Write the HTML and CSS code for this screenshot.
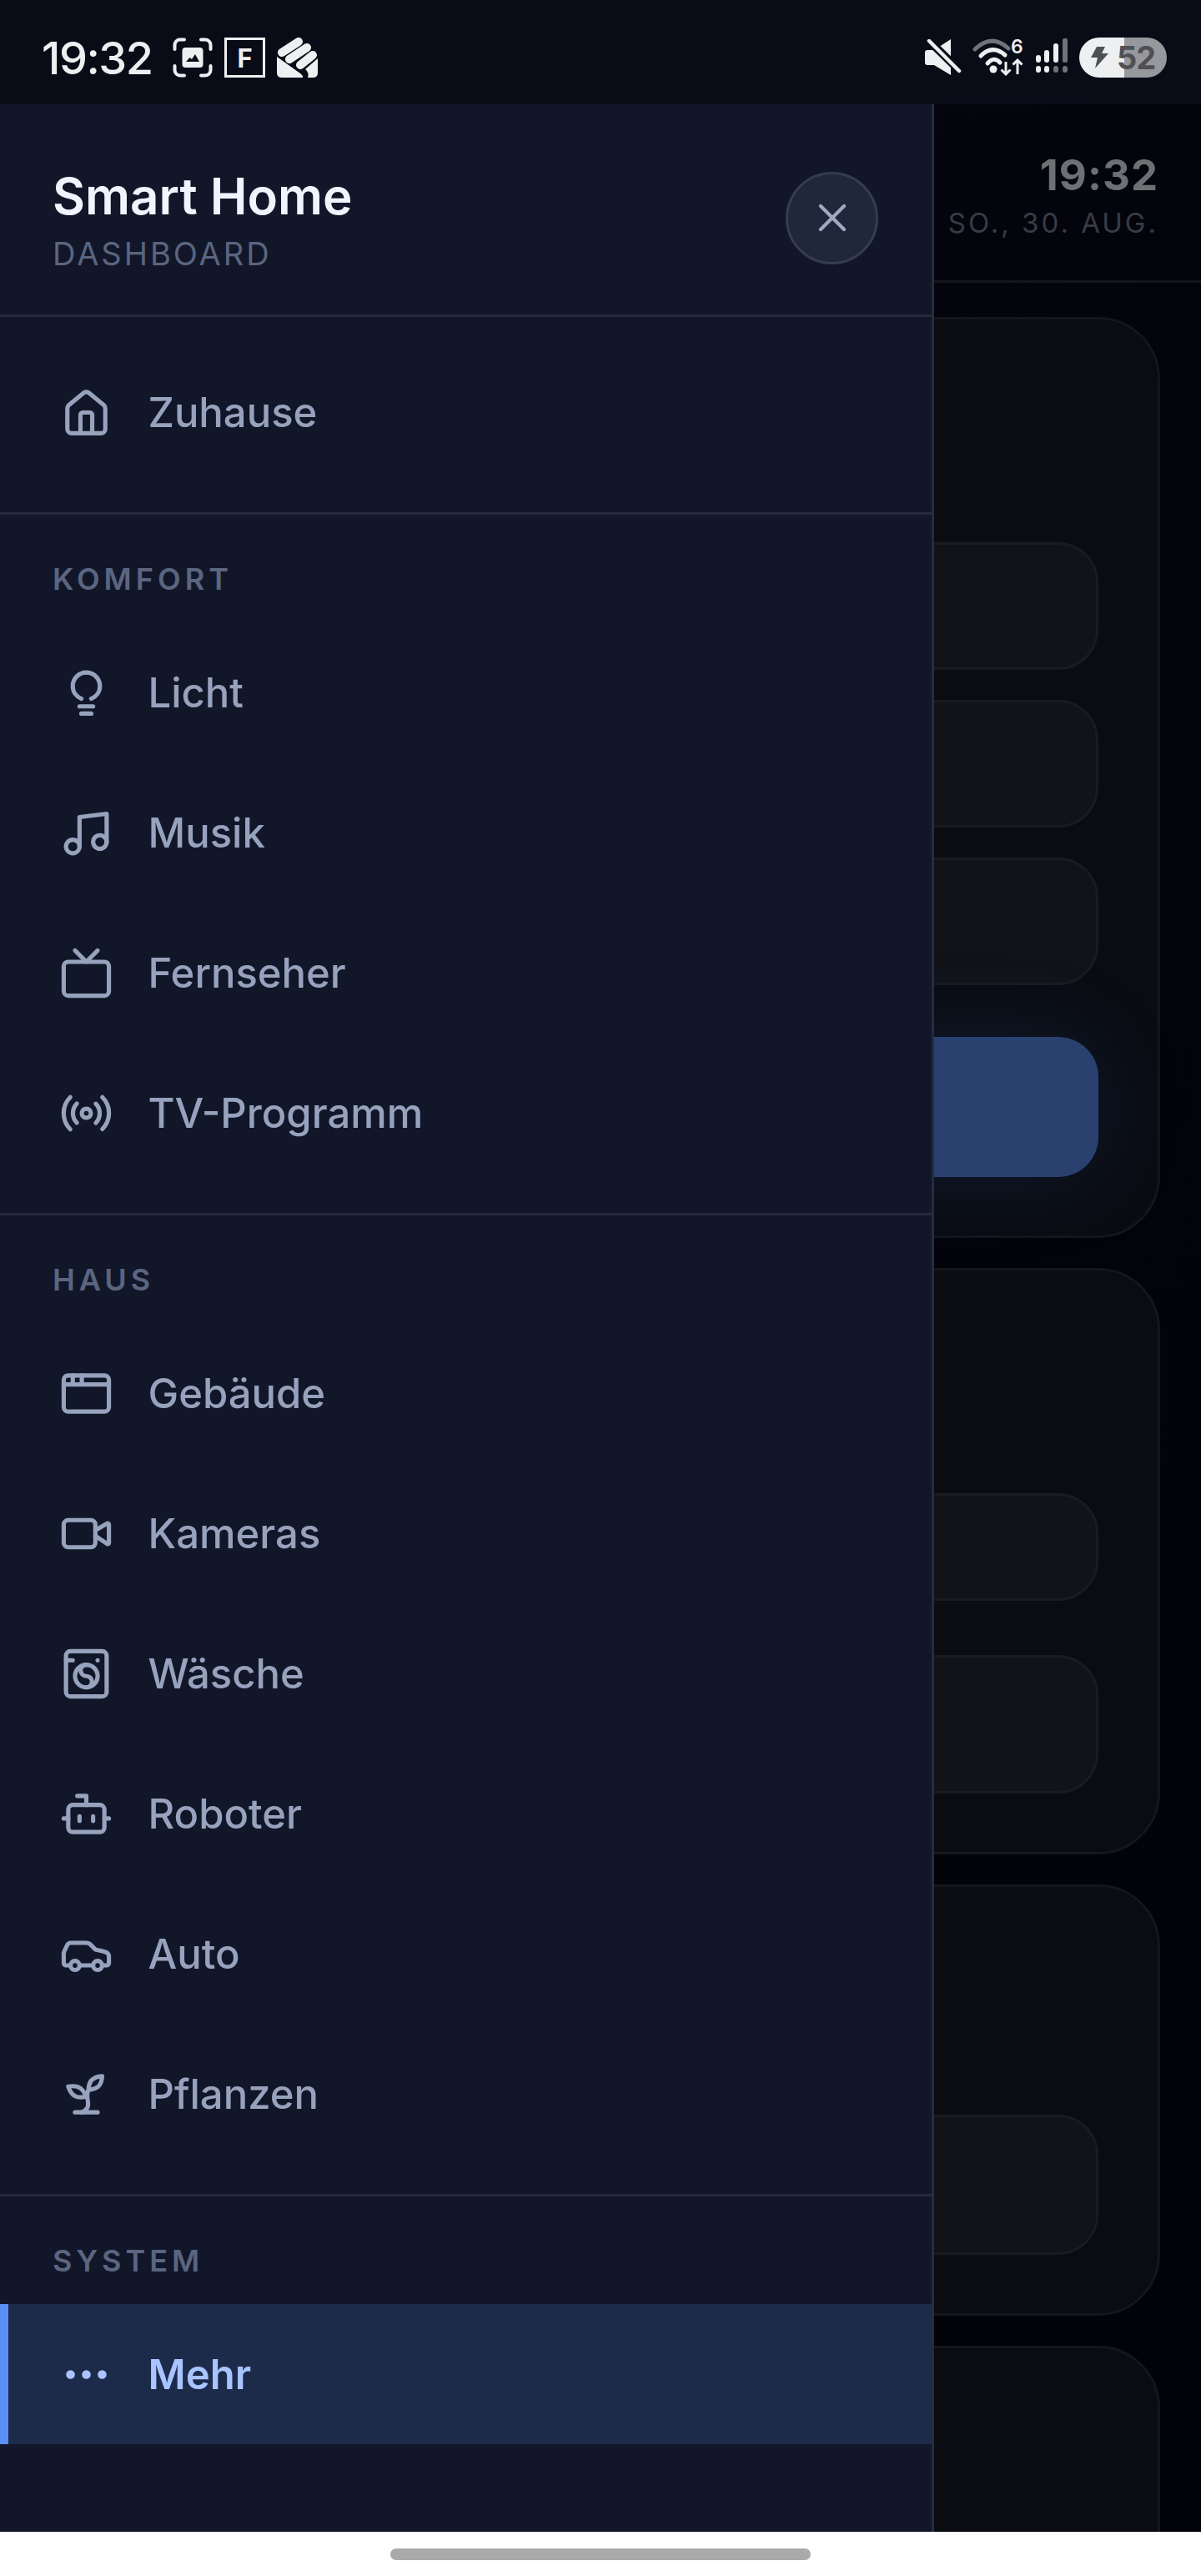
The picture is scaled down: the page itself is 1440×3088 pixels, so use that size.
FILE: index.html
```html
<!DOCTYPE html>
<html lang="de">
<head>
    <meta charset="UTF-8">
    <meta name="viewport" content="width=device-width, initial-scale=1.0">
    <title>Smart Home</title>
    <link rel="stylesheet" href="styles.css">
</head>
<body>
    <div class="phone">
        <!-- Android Statusleiste -->
        <div class="statusbar">
            <div class="status-left">
                <span class="status-time">19:32</span>
                <svg class="st-shot" width="48" height="48" viewBox="0 0 48 48">
                    <path d="M2.500 14V9a6.500 6.500 0 0 1 6.500-6.500h5M34 2.500h5a6.500 6.500 0 0 1 6.500 6.500v5M45.500 34v5a6.500 6.500 0 0 1-6.500 6.500h-5M14 45.500H9A6.500 6.500 0 0 1 2.500 39v-5" fill="none" stroke="#eeeff1" stroke-width="4" stroke-linecap="round"/>
                    <rect x="11.500" y="12" width="25" height="24" rx="4" fill="#eeeff1"/>
                    <path d="M16 29l4.500-5 2.500 2 4-6 5 9z" fill="#0a0d18"/>
                </svg>
                <span class="st-fbox">F</span>
                <svg class="st-fold" width="49" height="48" viewBox="0 0 49 48">
                    <path d="M0 23l28 20q4 3 3 5H6q-6 0-6-6zM37 48q2-6-3-10l15-13v17q0 6-6 6z" fill="#eeeff1"/>
                    <path d="M6 18L26 5M15 26L36 12M28 33L43 21" fill="none" stroke="#eeeff1" stroke-width="10" stroke-linecap="round"/>
                </svg>
            </div>
            <div class="status-right">
                <svg width="44" height="44" viewBox="0 0 44 44">
                    <path d="M0 16q0-3 3-3h8L31 0v43L11 31H3q-3 0-3-3z" fill="#eeeff1"/>
                    <path d="M2 -1L42 38" stroke="#090c17" stroke-width="10"/>
                    <path d="M5 2L41 38" stroke="#eeeff1" stroke-width="4.500" stroke-linecap="round"/>
                </svg>
                <svg width="62" height="58" viewBox="0 -6 62 58">
                    <path d="M3 13Q23 -6 43 12" fill="none" stroke="#707277" stroke-width="5" stroke-linecap="round"/>
                    <path d="M10 21Q24 7 39 20" fill="none" stroke="#eeeff1" stroke-width="5" stroke-linecap="round"/>
                    <path d="M18 30Q26 21 33 29" fill="none" stroke="#eeeff1" stroke-width="5" stroke-linecap="round"/>
                    <circle cx="25" cy="37" r="4.500" fill="#eeeff1"/>
                    <text class="st-six" x="46" y="18">6</text>
                    <path d="M40 28V43M34.500 37.500L40 43l5.500-5.500M54 43V26M48.500 31.500L54 26l5.500 5.500" fill="none" stroke="#eeeff1" stroke-width="3"/>
                </svg>
                <svg width="40" height="46" viewBox="0 0 40 46">
                    <rect x="1" y="20" width="6" height="9" rx="3" fill="#eeeff1"/>
                    <rect x="11" y="14" width="6" height="15" rx="3" fill="#eeeff1"/>
                    <rect x="22" y="6" width="6" height="23" rx="3" fill="#eeeff1"/>
                    <rect x="33" y="0" width="6" height="29" rx="2" fill="#707277"/>
                    <rect x="1" y="33" width="6" height="8" rx="3" fill="#eeeff1"/>
                    <rect x="11" y="33" width="6" height="8" rx="3" fill="#eeeff1"/>
                    <rect x="22" y="33" width="6" height="8" rx="3" fill="#707277"/>
                    <rect x="33" y="33" width="6" height="8" rx="3" fill="#707277"/>
                </svg>
                <div class="battery">
                    <svg width="22" height="26" viewBox="0 0 22 26">
                        <path d="M8 0h10l-4 8h8L6 26l3-13H1z" fill="#4f5055"/>
                    </svg>
                    <span class="battery-num">52</span>
                </div>
            </div>
        </div>

        <div class="stage">
            <!-- Dashboard hinter dem Menue -->
            <main class="main">
                <header class="main-head">
                    <div class="clock">19:32</div>
                    <div class="date">SO., 30. AUG.</div>
                </header>
                <div class="cards">
                    <section class="card card-a">
                        <div class="tile tile-m"></div>
                        <div class="tile tile-m"></div>
                        <div class="tile tile-m"></div>
                        <div class="tile-blue"></div>
                    </section>
                    <section class="card card-b">
                        <div class="tile tile-s"></div>
                        <div class="tile tile-l"></div>
                    </section>
                    <section class="card card-b card-d">
                        <div class="tile tile-l"></div>
                    </section>
                    <section class="card card-c"></section>
                </div>
            </main>

            <!-- Seitenmenue -->
            <aside class="drawer">
                <div class="drawer-head">
                    <div class="brand-block">
                        <div class="brand">Smart Home</div>
                        <div class="brand-sub">DASHBOARD</div>
                    </div>
                    <button class="close-btn" type="button" aria-label="Schließen">
                        <svg class="close-icon" viewBox="0 0 24 24"><path d="M18 6L6 18M6 6l12 12"/></svg>
                    </button>
                </div>

                <nav class="nav-group nav-first">
                    <a class="nav-item">
                        <svg class="icon" viewBox="0 0 24 24"><path d="M3.600 10.200a2 2 0 0 1 .7-1.500l6.400-5.300a2 2 0 0 1 2.600 0l6.400 5.300a2 2 0 0 1 .7 1.500v9a2 2 0 0 1-2 2H5.600a2 2 0 0 1-2-2z"/><path d="M14.600 21v-8a1 1 0 0 0-1-1h-3.200a1 1 0 0 0-1 1v8"/></svg>
                        <span>Zuhause</span>
                    </a>
                </nav>

                <nav class="nav-group">
                    <div class="nav-label">KOMFORT</div>
                    <a class="nav-item">
                        <svg class="icon" viewBox="0 0 24 24"><path d="M9.800 14.600C7.500 13.700 6 11.500 6 9a6 6 0 0 1 12 0c0 2.500-1.500 4.700-3.800 5.600"/><path d="M9 18h6M9.800 21.200h4.400"/></svg>
                        <span>Licht</span>
                    </a>
                    <a class="nav-item">
                        <svg class="icon" viewBox="0 0 24 24"><path d="M9 18V5l12-1.500V16"/><circle cx="6" cy="18" r="3"/><circle cx="18" cy="16" r="3"/></svg>
                        <span>Musik</span>
                    </a>
                    <a class="nav-item">
                        <svg class="icon" viewBox="0 0 24 24"><rect x="2" y="7" width="20" height="15" rx="2"/><path d="M17 2l-5 5-5-5"/></svg>
                        <span>Fernseher</span>
                    </a>
                    <a class="nav-item">
                        <svg class="icon" viewBox="0 0 24 24"><path d="M4.900 19.100C1 15.200 1 8.800 4.900 4.900"/><path d="M7.800 16.200c-2.300-2.300-2.300-6.100 0-8.500"/><circle cx="12" cy="12" r="2"/><path d="M16.200 7.800c2.300 2.300 2.300 6.100 0 8.500"/><path d="M19.100 4.900C23 8.800 23 15.100 19.100 19"/></svg>
                        <span>TV-Programm</span>
                    </a>
                </nav>

                <nav class="nav-group">
                    <div class="nav-label">HAUS</div>
                    <a class="nav-item">
                        <svg class="icon" viewBox="0 0 24 24"><rect x="2" y="4" width="20" height="16" rx="2"/><path d="M10 4v4M2 8h20M6 4v4"/></svg>
                        <span>Gebäude</span>
                    </a>
                    <a class="nav-item">
                        <svg class="icon" viewBox="0 0 24 24"><path d="M16 13l5.200 3.500a.5.5 0 0 0 .8-.4V7.900a.5.5 0 0 0-.8-.4L16 10.500"/><rect x="2" y="6" width="14" height="12" rx="2"/></svg>
                        <span>Kameras</span>
                    </a>
                    <a class="nav-item">
                        <svg class="icon" viewBox="0 0 24 24"><path d="M3 6h3M17 6h.01"/><rect x="3" y="2" width="18" height="20" rx="2"/><circle cx="12" cy="13" r="5"/><path d="M12 18a2.500 2.500 0 0 0 0-5 2.500 2.500 0 0 1 0-5"/></svg>
                        <span>Wäsche</span>
                    </a>
                    <a class="nav-item">
                        <svg class="icon" viewBox="0 0 24 24"><path d="M12 8V4H8"/><rect x="4" y="8" width="16" height="12" rx="2"/><path d="M2 14h2M20 14h2M15 13v2M9 13v2"/></svg>
                        <span>Roboter</span>
                    </a>
                    <a class="nav-item">
                        <svg class="icon" viewBox="0 0 24 24"><path d="M19 17h2c.6 0 1-.4 1-1v-3c0-.9-.7-1.700-1.500-1.900C18.700 10.600 16 10 16 10s-1.300-1.400-2.200-2.300c-.5-.4-1.100-.7-1.800-.7H5c-.6 0-1.100.4-1.400.9l-1.400 2.900A3.700 3.700 0 0 0 2 12v4c0 .6.4 1 1 1h2"/><circle cx="7" cy="17" r="2"/><path d="M9 17h6"/><circle cx="17" cy="17" r="2"/></svg>
                        <span>Auto</span>
                    </a>
                    <a class="nav-item">
                        <svg class="icon" viewBox="0 0 24 24"><path d="M7 20h10"/><path d="M10 20c5.500-2.500.8-6.400 3-10"/><path d="M9.500 9.400c1.100.8 1.800 2.200 2.300 3.700-2 .4-3.500.4-4.800-.3-1.200-.6-2.300-1.900-3-4.200 2.800-.5 4.400 0 5.500.8z"/><path d="M14.100 6a7 7 0 0 0-1.100 4c1.900-.1 3.300-.6 4.300-1.400 1-1 1.600-2.300 1.700-4.600-2.700.1-4 1-4.900 2z"/></svg>
                        <span>Pflanzen</span>
                    </a>
                </nav>

                <nav class="nav-group nav-last">
                    <div class="nav-label">SYSTEM</div>
                    <a class="nav-item nav-active">
                        <svg class="icon" viewBox="0 0 24 24"><circle cx="12" cy="12" r="1"/><circle cx="19" cy="12" r="1"/><circle cx="5" cy="12" r="1"/></svg>
                        <span>Mehr</span>
                    </a>
                </nav>
            </aside>
        </div>

        <div class="gesturebar">
            <div class="gesture-pill"></div>
        </div>
    </div>
</body>
</html>
```

FILE: styles.css
```css
* {
    box-sizing: border-box;
}
html, body {
    margin: 0;
    padding: 0;
}
body {
    width: 1440px;
    height: 3088px;
    font-family: Inter, "Liberation Sans", sans-serif;
    background-color: #fff;
    overflow: hidden;
}
.phone {
    display: flex;
    flex-direction: column;
    height: 3088px;
}

/* Statusleiste */
.statusbar {
    flex: 0 0 125px;
    display: flex;
    justify-content: space-between;
    align-items: flex-start;
    padding: 45px 41px 0 50px;
    background-color: #090c17;
}
.status-left, .status-right {
    display: flex;
    align-items: center;
    height: 48px;
}
.status-left {
    gap: 14px;
}
.status-right {
    gap: 13px;
}
.status-time {
    width: 143px;
    flex: none;
    font-size: 54px;
    font-weight: 500;
    letter-spacing: -1.500px;
    color: #eeeff1;
}
.st-fbox {
    width: 49px;
    height: 48px;
    display: flex;
    align-items: center;
    justify-content: center;
    border: 3px solid #eeeff1;
    font-size: 31px;
    font-weight: 700;
    color: #eeeff1;
}
.st-six {
    font-size: 23px;
    font-weight: 600;
    fill: #eeeff1;
}
.battery {
    width: 105px;
    height: 48px;
    display: flex;
    align-items: center;
    gap: 10px;
    padding-left: 13px;
    border-radius: 24px;
    background: linear-gradient(90deg, #eeeff1 54px, #97989d 54px);
}
.battery-num {
    font-size: 38px;
    font-weight: 700;
    letter-spacing: -1px;
    color: #4f5055;
}

/* Dashboard im Hintergrund */
.stage {
    position: relative;
    flex: 1;
    overflow: hidden;
    background: linear-gradient(120deg, #05070f 0%, #03040b 55%, #020308 100%);
}
.main {
    height: 100%;
}
.main-head {
    height: 214px;
    padding: 58px 51px 0 0;
    text-align: right;
    border-bottom: 3px solid #14161c;
}
.clock {
    font-size: 51px;
    font-weight: 700;
    line-height: 54px;
    letter-spacing: 1px;
    color: #6f7074;
}
.date {
    margin-top: 10px;
    font-size: 33px;
    line-height: 40px;
    letter-spacing: 3px;
    color: #393b46;
}
.cards {
    display: flex;
    flex-direction: column;
    gap: 36px;
    padding: 41px 49px 0;
}
.card {
    flex: none;
    display: flex;
    flex-direction: column;
    padding: 267px 71px 70px;
    background-color: #0a0c12;
    border: 3px solid #14161c;
    border-radius: 74px;
}
.card-a {
    gap: 36px;
}
.card-b {
    gap: 65px;
}
.card-d {
    padding-top: 273px;
}
.card-c {
    height: 400px;
}
.tile {
    background-color: #111318;
    border: 3px solid #191b21;
    border-radius: 48px;
}
.tile-s {
    height: 129px;
}
.tile-m {
    height: 153px;
}
.tile-l {
    height: 166px;
}
.card-d .tile-l {
    height: 168px;
}
.tile-blue {
    height: 168px;
    margin-top: 26px;
    border-radius: 48px;
    background-color: #2a4170;
    box-shadow: 0 0 110px rgba(60, 110, 220, 0.14);
}

/* Seitenmenue */
.drawer {
    position: absolute;
    top: 0;
    left: 0;
    bottom: 0;
    width: 1120px;
    background-color: #111729;
    border-right: 3px solid #262c3e;
}
.drawer-head {
    height: 255px;
    display: flex;
    justify-content: space-between;
    align-items: center;
    padding: 20px 64px 0 63px;
    border-bottom: 3px solid #262c3e;
}
.brand-block {
    margin-top: 4px;
}
.brand {
    font-size: 60px;
    font-weight: 600;
    line-height: 68px;
    color: #f1f4fd;
}
.brand-sub {
    margin-top: 13px;
    font-size: 38px;
    line-height: 44px;
    letter-spacing: 3px;
    color: #5b6580;
}
.close-btn {
    width: 111px;
    height: 111px;
    display: flex;
    align-items: center;
    justify-content: center;
    padding: 0;
    border: 3px solid #363c4f;
    border-radius: 50%;
    background-color: #21273a;
}
.close-icon {
    width: 56px;
    height: 56px;
    fill: none;
    stroke: #a1a9c1;
    stroke-width: 1.800;
    stroke-linecap: round;
}
.nav-group {
    padding-bottom: 36px;
    border-bottom: 3px solid #262c3e;
}
.nav-first {
    padding-top: 30px;
}
.nav-last {
    border-bottom: none;
}
.nav-label {
    height: 129px;
    padding: 59px 63px 0;
    font-size: 36px;
    font-weight: 600;
    line-height: 36px;
    letter-spacing: 5px;
    color: #5b6580;
}
.nav-item {
    height: 168px;
    display: flex;
    align-items: center;
    gap: 41.500px;
    padding-left: 71px;
    font-size: 49px;
    font-weight: 500;
    color: #97a2bd;
}
.nav-active {
    padding-left: 61px;
    border-left: 10px solid #5b8ff5;
    background-color: #1d2b4b;
    font-weight: 600;
    color: #a9c4ff;
}
.icon {
    flex: none;
    width: 65px;
    height: 65px;
    fill: none;
    stroke: currentColor;
    stroke-width: 1.900;
    stroke-linecap: round;
    stroke-linejoin: round;
}
.nav-active .icon {
    fill: currentColor;
}

/* Gestenleiste */
.gesturebar {
    flex: 0 0 53px;
    display: flex;
    justify-content: center;
    padding-top: 20px;
    background-color: #fff;
}
.gesture-pill {
    width: 504px;
    height: 14px;
    border-radius: 7px;
    background-color: #aaa;
}
```
